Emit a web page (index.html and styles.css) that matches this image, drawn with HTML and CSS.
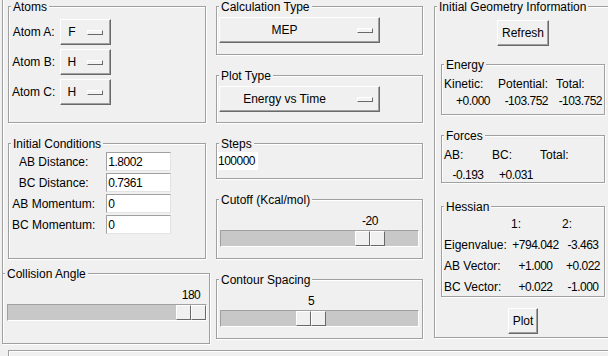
FILE: index.html
```html
<!DOCTYPE html>
<html>

<head>
    <meta charset="UTF-8">
    <title>Reaction Dynamics</title>
    <link rel="stylesheet" href="styles.css">
</head>

<body>
    <div class="app">
        <div class="col-left">
            <div class="upper">
                <div class="group atoms">
                    <div class="group-title">Atoms</div>
                    <div class="atom-grid">
                        <span>Atom A:</span>
                        <div class="menubutton small"><span>F</span><i class="indicator"></i></div>
                        <span>Atom B:</span>
                        <div class="menubutton small"><span>H</span><i class="indicator"></i></div>
                        <span>Atom C:</span>
                        <div class="menubutton small"><span>H</span><i class="indicator"></i></div>
                    </div>
                </div>

                <div class="group conditions">
                    <div class="group-title">Initial Conditions</div>
                    <div class="field-grid">
                        <span>AB Distance:</span><input class="entry" type="text" value="1.8002">
                        <span>BC Distance:</span><input class="entry" type="text" value="0.7361">
                        <span>AB Momentum:</span><input class="entry" type="text" value="0">
                        <span>BC Momentum:</span><input class="entry" type="text" value="0">
                    </div>
                </div>
            </div>

            <div class="group collision">
                <div class="group-title">Collision Angle</div>
                <div class="scale wide-scale">
                    <div class="scale-value"><span style="width:169px"></span><span class="scale-num">180</span></div>
                    <div class="trough"><span style="width:168px"></span><span class="slider"><i></i><i></i></span></div>
                </div>
            </div>
        </div>

        <div class="col-mid">
            <div class="group calc">
                <div class="group-title">Calculation Type</div>
                <div class="menubutton wide"><span class="mb-text">MEP</span><i class="indicator"></i></div>
            </div>

            <div class="group plot-type">
                <div class="group-title">Plot Type</div>
                <div class="menubutton wide"><span class="mb-text">Energy vs Time</span><i class="indicator"></i></div>
            </div>

            <div class="group steps">
                <div class="group-title">Steps</div>
                <input class="entry steps-entry" type="text" value="100000">
            </div>

            <div class="group cutoff">
                <div class="group-title">Cutoff (Kcal/mol)</div>
                <div class="scale mid-scale">
                    <div class="scale-value"><span style="width:135px"></span><span class="scale-num">-20</span></div>
                    <div class="trough"><span style="width:134px"></span><span class="slider"><i></i><i></i></span></div>
                </div>
            </div>

            <div class="group contour">
                <div class="group-title">Contour Spacing</div>
                <div class="scale mid-scale">
                    <div class="scale-value"><span style="width:76px"></span><span class="scale-num">5</span></div>
                    <div class="trough"><span style="width:75px"></span><span class="slider"><i></i><i></i></span></div>
                </div>
            </div>
        </div>

        <div class="group col-right">
            <div class="group-title">Initial Geometry Information</div>
            <div class="geo-body">
                <div class="button refresh">Refresh</div>

                <div class="group energy">
                    <div class="group-title">Energy</div>
                    <div class="info-grid energy-grid">
                        <span>Kinetic:</span><span>Potential:</span><span>Total:</span>
                        <span class="num">+0.000</span><span class="num">-103.752</span><span class="num">-103.752</span>
                    </div>
                </div>

                <div class="group forces">
                    <div class="group-title">Forces</div>
                    <div class="info-grid forces-grid">
                        <span>AB:</span><span>BC:</span><span>Total:</span>
                        <span class="num">-0.193</span><span class="num">+0.031</span><span></span>
                    </div>
                </div>

                <div class="group hessian">
                    <div class="group-title">Hessian</div>
                    <div class="info-grid hessian-grid">
                        <span></span><span class="head">1:</span><span class="head">2:</span>
                        <span>Eigenvalue:</span><span class="num">+794.042</span><span class="num">-3.463</span>
                        <span>AB Vector:</span><span class="num">+1.000</span><span class="num">+0.022</span>
                        <span>BC Vector:</span><span class="num">+0.022</span><span class="num">-1.000</span>
                    </div>
                </div>

                <div class="button plot">Plot</div>
            </div>
        </div>
    </div>

    <div class="status"></div>
</body>

</html>
```

FILE: styles.css
```css
html,
body {
    margin: 0;
    padding: 0;
    width: 608px;
    height: 356px;
    overflow: hidden;
}

body {
    background-color: #f0f0f0;
    font-family: "Liberation Sans", Arial, sans-serif;
    font-size: 12px;
    line-height: 14px;
    color: #000;
    white-space: nowrap;
}

.app {
    display: flex;
    align-items: flex-start;
    height: 350px;
    padding-left: 2px;
}

/* groove frame like a Tk labelframe */
.group {
    box-sizing: border-box;
    border: 1px solid #a0a0a0;
    box-shadow: inset 1px 1px #fff, 1px 1px #fff;
}

.group-title {
    width: fit-content;
    margin: -7px 0 0 2px;
    padding: 0 2px;
    background-color: #f0f0f0;
}

/* left column */
.col-left {
    flex-shrink: 0;
    width: 208px;
}

.upper {
    box-sizing: border-box;
    height: 273px;
    padding: 6px 0 0 5px;
    border-left: 1px solid #a0a0a0;
    box-shadow: inset 1px 0 #fff;
}

.atoms {
    width: 198px;
    height: 117px;
}

.atom-grid {
    display: grid;
    grid-template-columns: max-content 50px;
    grid-auto-rows: 26px;
    column-gap: 5px;
    row-gap: 4px;
    align-items: center;
    justify-items: center;
    margin-top: 5px;
    padding-left: 3px;
}

.conditions {
    width: 198px;
    height: 116px;
    margin-top: 20px;
}

.field-grid {
    display: grid;
    grid-template-columns: max-content 65px;
    grid-auto-rows: 19px;
    column-gap: 11px;
    row-gap: 2px;
    align-items: center;
    justify-items: center;
    margin-top: 1px;
    padding-left: 3px;
}

.entry {
    box-sizing: border-box;
    width: 65px;
    height: 19px;
    margin: 0;
    padding: 0 1px;
    font: inherit;
    letter-spacing: -0.5px;
    color: #000;
    background-color: #fff;
    border: 1px solid;
    border-color: #a0a0a0 #e3e3e3 #e3e3e3 #a0a0a0;
    outline: none;
}

.collision {
    width: 208px;
    height: 71px;
}

/* menubuttons and buttons */
.menubutton,
.button {
    box-sizing: border-box;
    display: flex;
    align-items: center;
    height: 26px;
    background-color: #f0f0f0;
    border: 1px solid;
    border-color: #fff #696969 #696969 #fff;
    box-shadow: inset -1px -1px #a0a0a0;
}

.menubutton.small {
    gap: 11px;
    padding: 0 7px;
}

.menubutton.wide {
    width: 161px;
    margin: 3px 0 0 2px;
}

.mb-text {
    flex: 1;
    text-align: center;
}

.menubutton.wide .indicator {
    margin: 0 6px 0 8px;
}

.indicator {
    box-sizing: border-box;
    display: block;
    width: 16px;
    height: 5px;
    background-color: #f4f4f4;
    border: 1px solid;
    border-color: #fff #696969 #696969 #fff;
}

.button {
    padding: 0 4px;
}

/* scales */
.scale-value,
.trough {
    display: flex;
}

.scale-value {
    margin-top: 7px;
}

.scale-num {
    width: 30px;
    text-align: center;
    letter-spacing: -0.5px;
}

.trough {
    box-sizing: border-box;
    height: 17px;
    margin-top: 2px;
    background-color: #c8c8c8;
    border: 1px solid;
    border-color: #a0a0a0 #fff #fff #a0a0a0;
}

.wide-scale {
    margin: 0 2px 0 4px;
}

.mid-scale {
    margin: 0 3px;
}

.slider {
    display: flex;
    width: 30px;
    height: 15px;
}

.slider i {
    box-sizing: border-box;
    flex: 1;
    background-color: #f0f0f0;
    border: 1px solid;
    border-color: #fff #696969 #696969 #fff;
}

/* middle column */
.col-mid {
    flex-shrink: 0;
    display: flex;
    flex-direction: column;
    gap: 20px;
    width: 207px;
    margin-left: 6px;
    padding-top: 6px;
}

.calc {
    height: 49px;
}

.plot-type {
    height: 48px;
}

.steps {
    height: 36px;
}

.steps-entry {
    width: 41px;
    height: 18px;
    margin-top: 1px;
    padding: 0;
    border-color: #fff;
}

.cutoff,
.contour {
    height: 60px;
}

/* right column */
.col-right {
    flex-shrink: 0;
    width: 176px;
    height: 332px;
    margin: 6px 0 0 11px;
}

.geo-body {
    display: flex;
    flex-direction: column;
    align-items: center;
    width: 164px;
    margin-left: 6px;
}

.refresh {
    margin-top: 6px;
}

.geo-body .group {
    align-self: stretch;
}

.energy {
    height: 51px;
    margin-top: 18px;
}

.forces {
    height: 48px;
    margin-top: 20px;
}

.hessian {
    height: 91px;
    margin-top: 23px;
}

.plot {
    margin-top: 11px;
}

.info-grid {
    display: grid;
    padding-left: 2px;
}

.num {
    text-align: center;
    letter-spacing: -0.5px;
}

.energy-grid {
    grid-template-columns: 54px 58px 48px;
    row-gap: 3px;
    margin-top: 5px;
}

.energy-grid .num {
    text-align: right;
    padding-right: 8px;
}

.energy-grid .num:last-child {
    padding-right: 2px;
}

.forces-grid {
    grid-template-columns: 48px 48px 48px;
    row-gap: 6px;
    margin-top: 5px;
}

.hessian-grid {
    grid-template-columns: 65px 53px 42px;
    row-gap: 7px;
    margin-top: 3px;
}

.hessian-grid .head {
    padding-left: 2px;
}

.hessian-grid .head + .head {
    padding-left: 0;
}

/* top of the next frame, cut off by the window */
.status {
    height: 6px;
    margin-left: 8px;
    border-top: 1px solid #a0a0a0;
    border-left: 1px solid #a0a0a0;
    box-shadow: inset 1px 1px #fff;
}
```
